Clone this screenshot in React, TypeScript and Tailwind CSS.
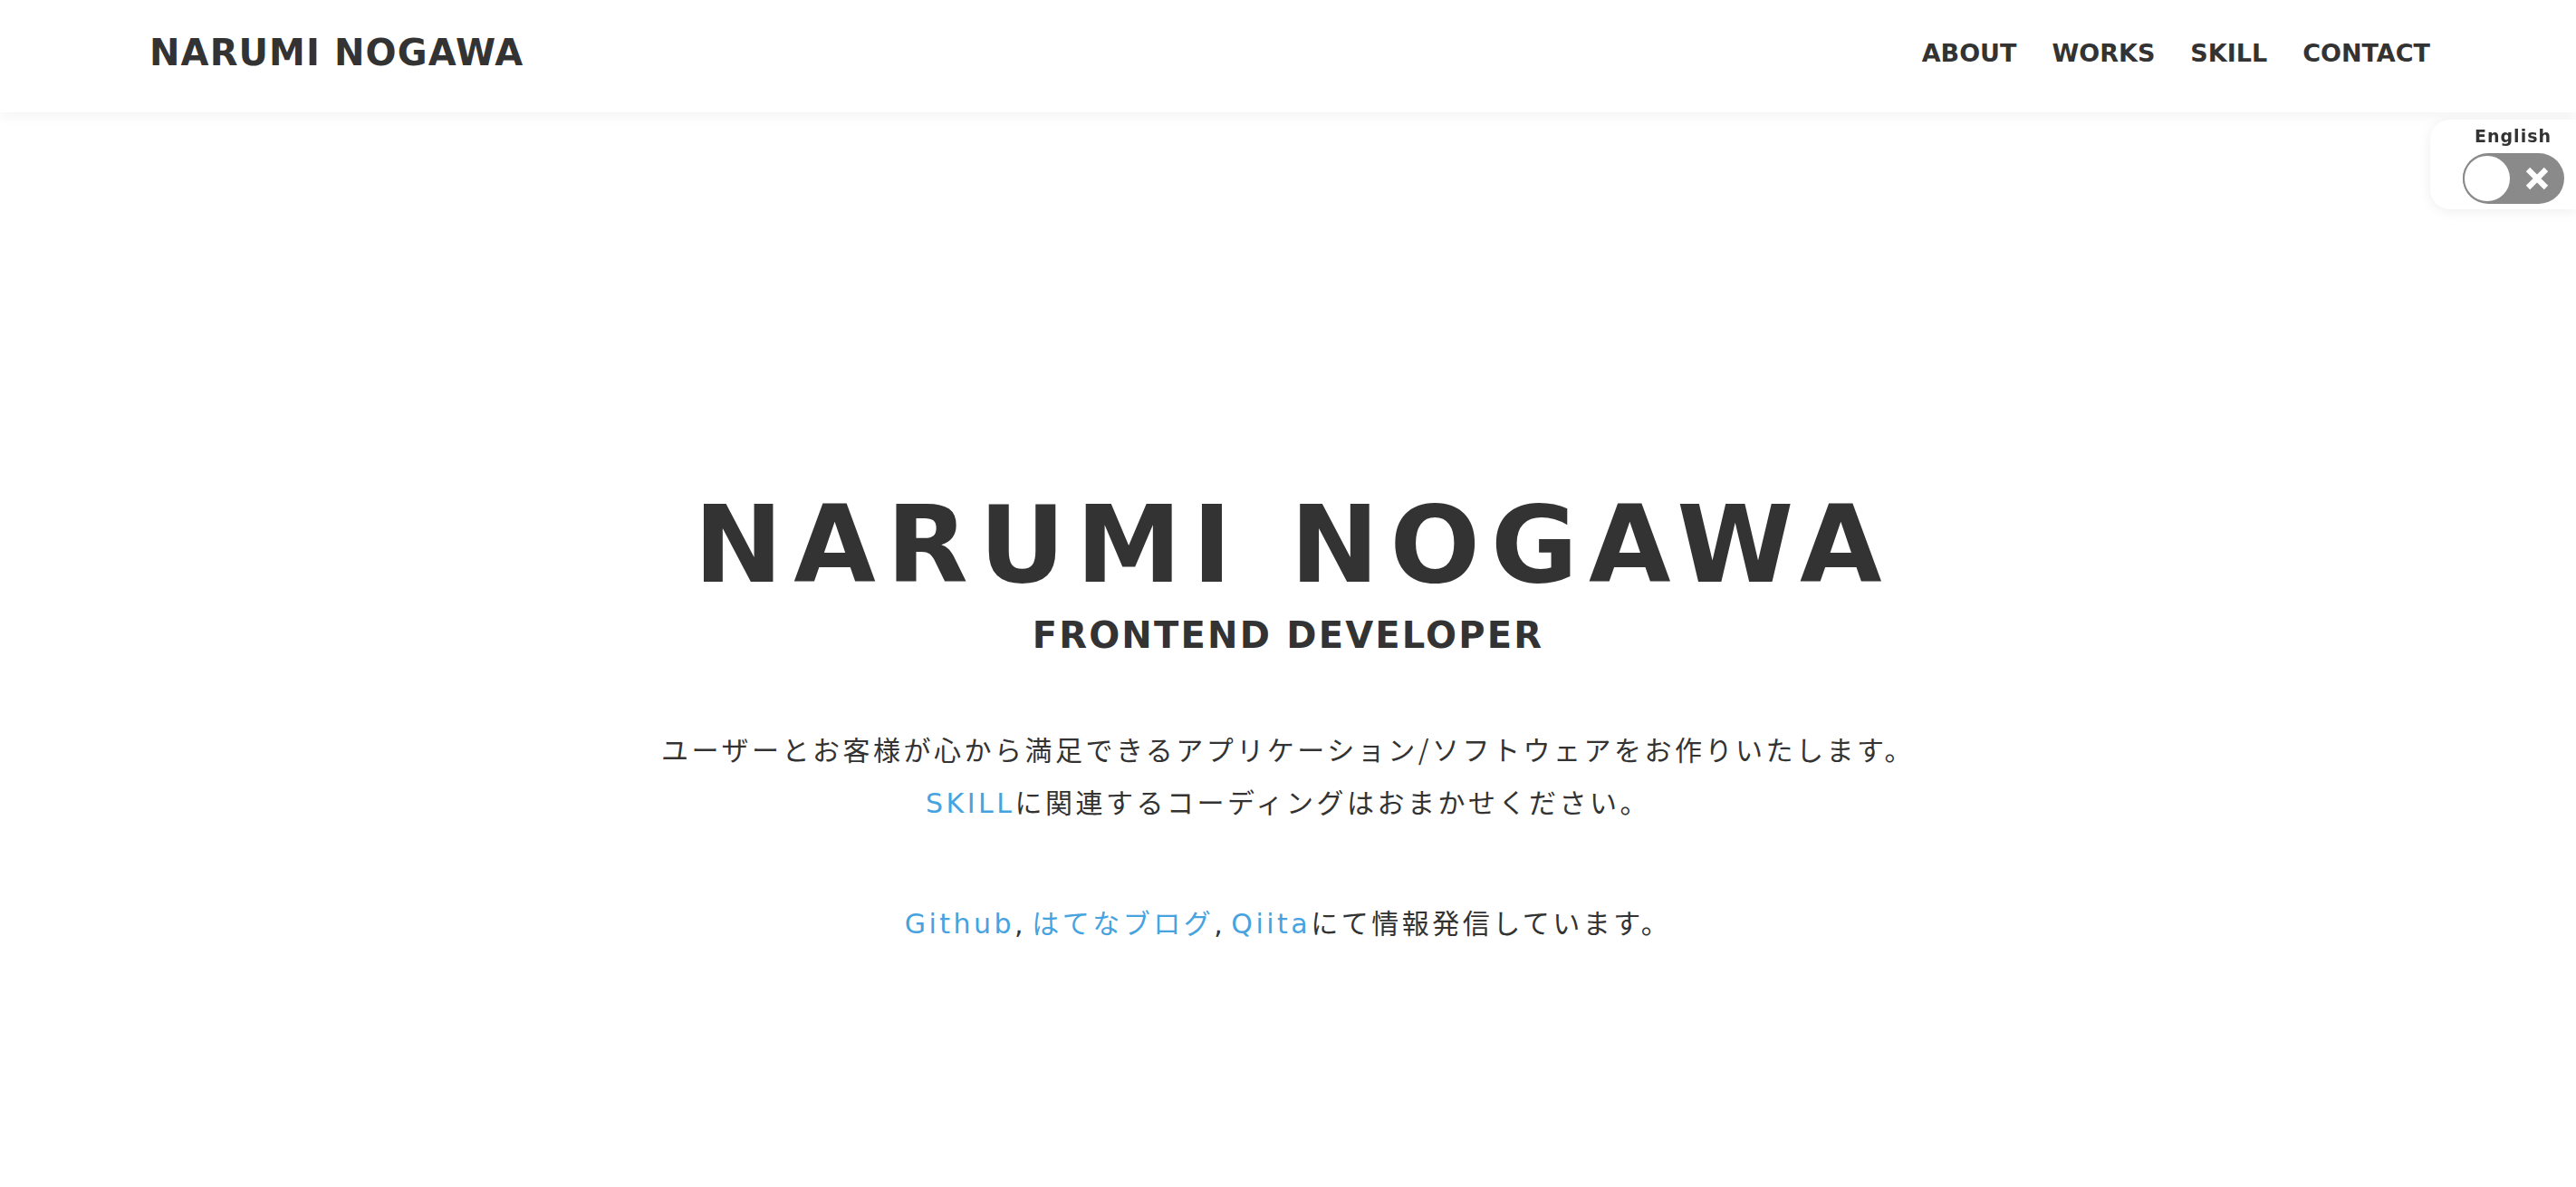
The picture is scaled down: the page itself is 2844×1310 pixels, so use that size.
import React, { useState } from 'react';

const navItems = ['ABOUT', 'WORKS', 'SKILL', 'CONTACT'];

const latin = "font-['DejaVu_Sans',sans-serif]";

const LangToggle = () => {
    const [english, setEnglish] = useState(false);

    return (
        <div className="fixed right-0 top-[132px] z-40 flex h-[99px] w-[161px] flex-col items-center rounded-l-[22px] bg-white pl-[22px] pt-[6px] shadow-[0_2px_14px_rgba(0,0,0,0.07)]">
            <span className={`${latin} text-[19px] font-bold leading-[24px] tracking-[1px] text-[#333]`}>English</span>
            <button
                onClick={() => setEnglish(!english)}
                className="mt-[7px] flex h-[56px] w-[112px] items-center rounded-full bg-[#8a8a8a]"
            >
                <span className="block h-[54px] w-[54px] rounded-full border-2 border-[#8a8a8a] bg-white"></span>
                <svg viewBox="0 0 24 24" className="ml-[13px] h-[30px] w-[30px]" fill="none" stroke="white" strokeWidth="5" strokeLinecap="butt">
                    <path d="M4 4 L20 20 M20 4 L4 20" />
                </svg>
            </button>
        </div>
    );
};

const Header = () => (
    <header className="relative z-30 h-[124px] w-full bg-white shadow-[0_4px_14px_rgba(0,0,0,0.05)]">
        <div className="flex h-full items-center justify-between pb-[8px] pl-[165px] pr-[161px]">
            <div className={`${latin} text-[40px] font-bold leading-none tracking-[1.1px] text-[#333]`}>
                NARUMI NOGAWA
            </div>
            <nav className={`${latin} flex gap-[39px] text-[27px] font-bold leading-none text-[#333]`}>
                {navItems.map((item) => (
                    <a key={item} href={`#${item.toLowerCase()}`} className="hover:text-[#47a3df]">
                        {item}
                    </a>
                ))}
            </nav>
        </div>
    </header>
);

const Link = ({ children }: { children: React.ReactNode }) => (
    <a href="#" className={`${latin} text-[#47a3df]`}>{children}</a>
);

const Comma = () => <span className={`${latin} tracking-normal`}>, </span>;

const Hero = () => (
    <section className="flex flex-col items-center pt-[419px] pb-[200px] text-[#333]">
        <h1 className={`${latin} mr-[-12px] text-[117px] font-bold leading-[117px] tracking-[12px]`}>
            NARUMI NOGAWA
        </h1>
        <h2 className={`${latin} mt-[21px] text-[40px] font-bold leading-[40px] tracking-[2.2px]`}>
            FRONTEND DEVELOPER
        </h2>
        <div className="mt-[76px] flex flex-col items-center font-['Noto_Sans_CJK_JP',sans-serif] text-[30px] leading-[58px] tracking-[3.5px]">
            <p>ユーザーとお客様が心から満足できるアプリケーション/ソフトウェアをお作りいたします。</p>
            <p><Link>SKILL</Link>に関連するコーディングはおまかせください。</p>
            <p className="mt-[72px]">
                <Link>Github</Link><Comma /><a href="#" className="text-[#47a3df]">はてなブログ</a><Comma /><Link>Qiita</Link>にて情報発信しています。
            </p>
        </div>
    </section>
);

export default function App() {
    return (
        <div className="min-h-screen bg-white">
            <Header />
            <LangToggle />
            <Hero />
        </div>
    );
}
